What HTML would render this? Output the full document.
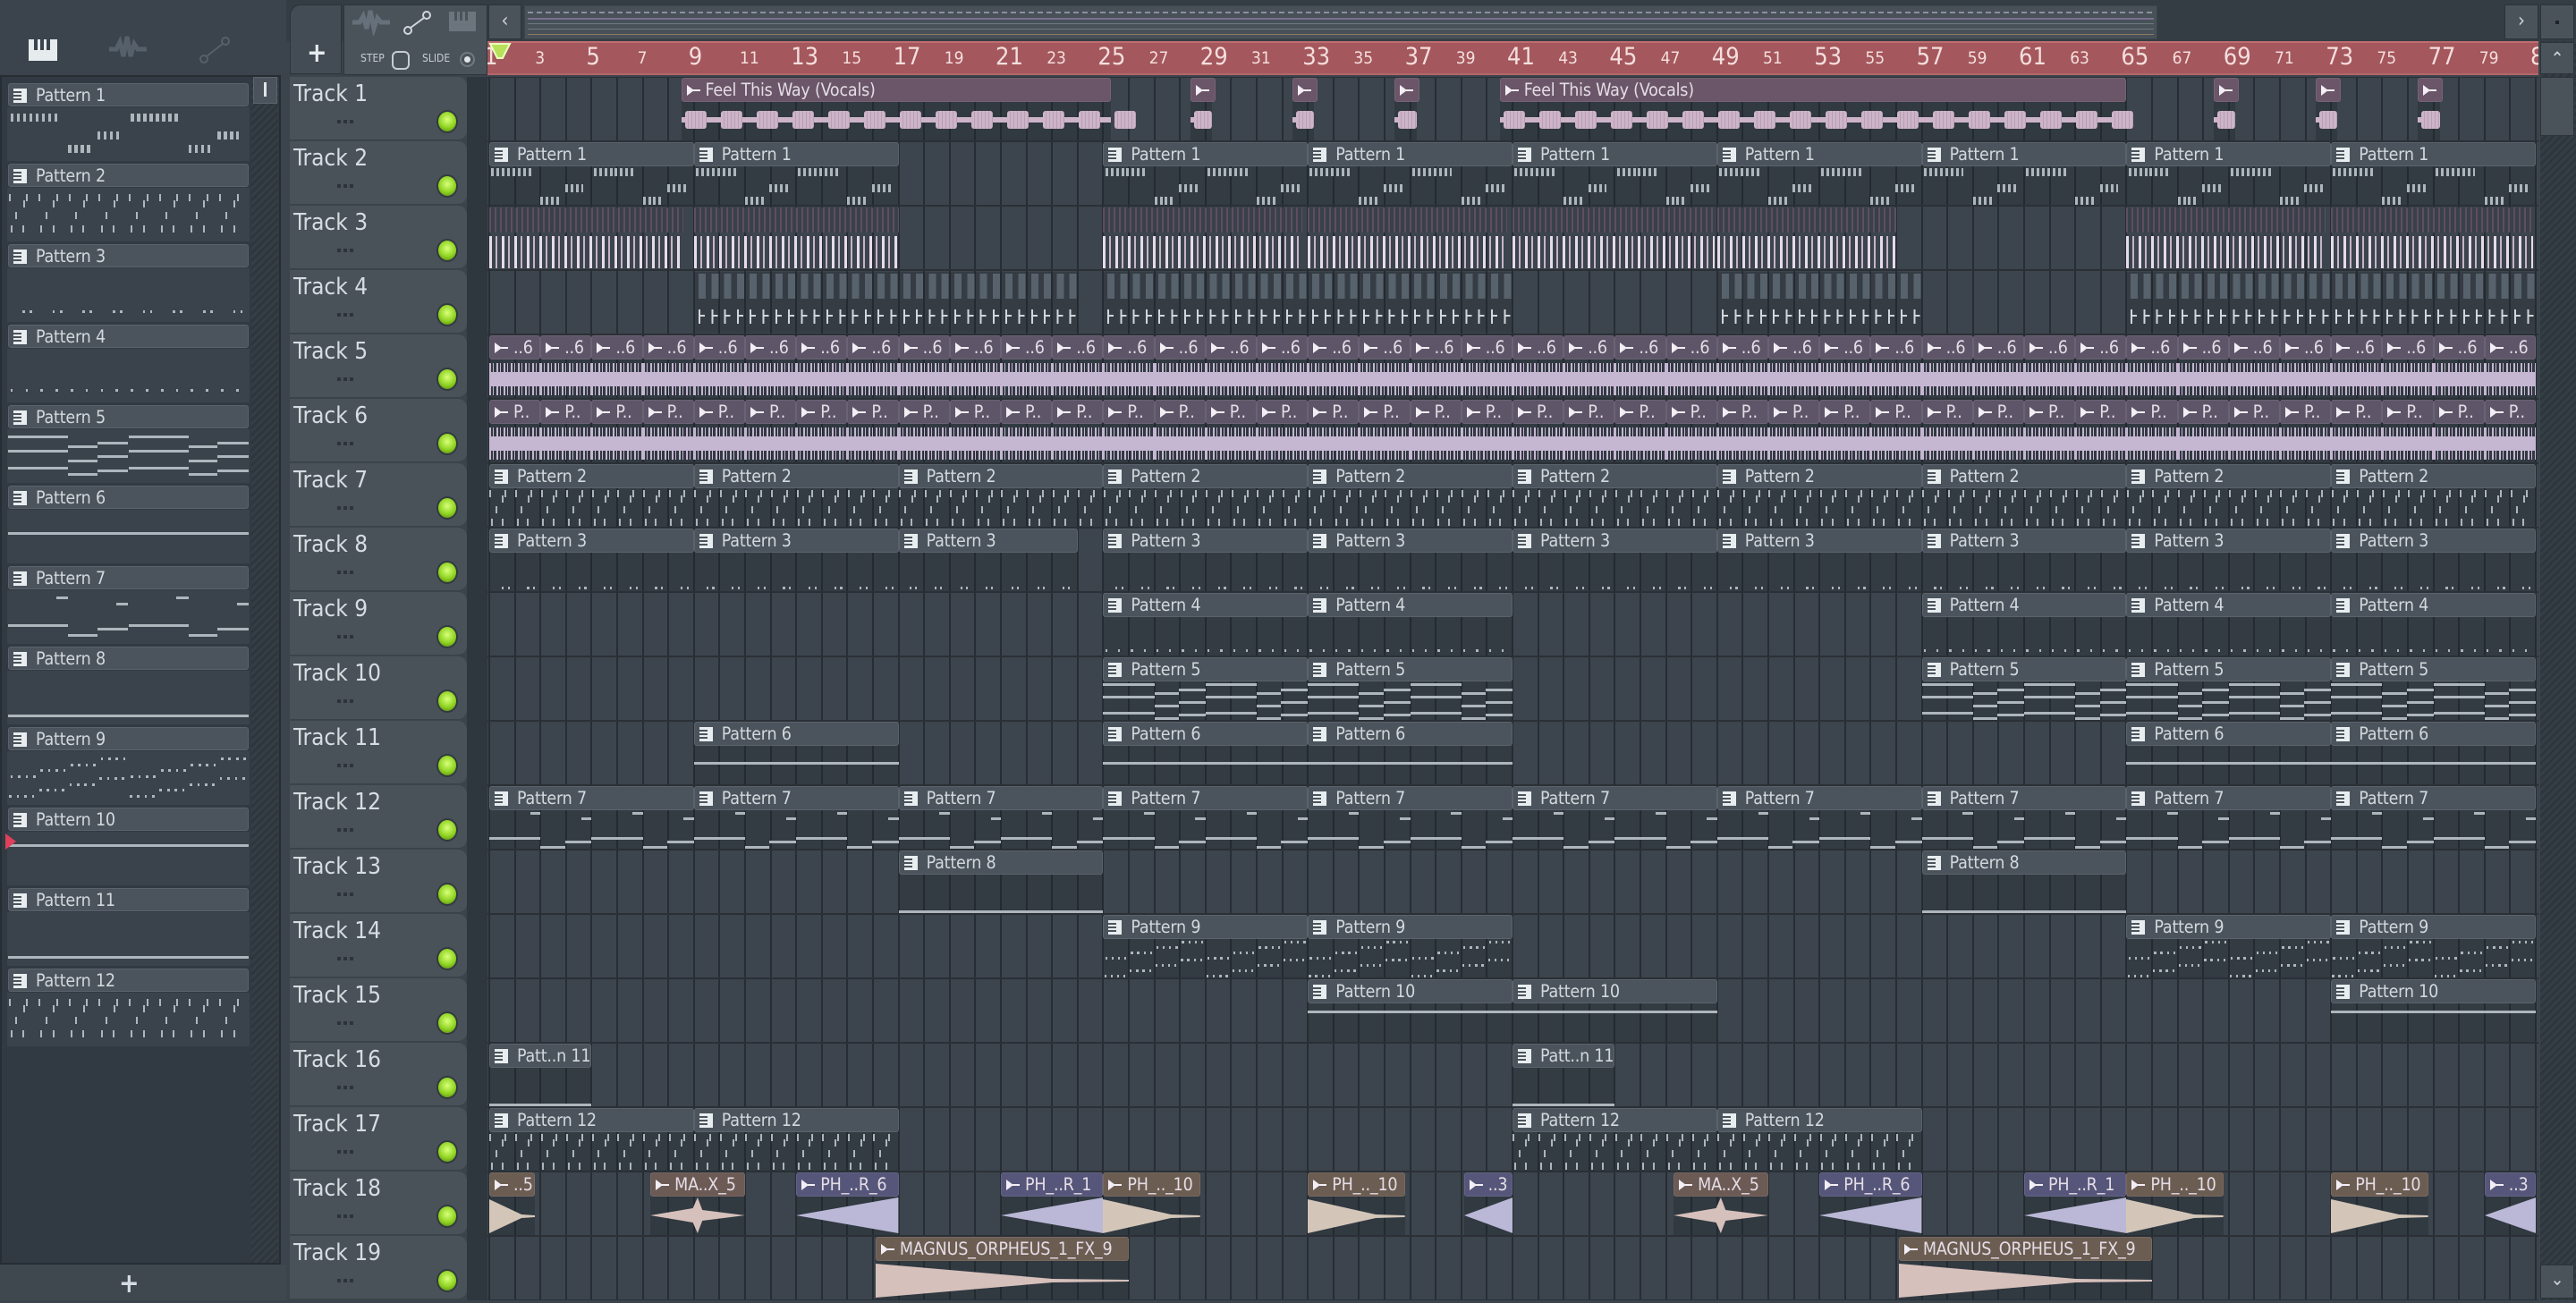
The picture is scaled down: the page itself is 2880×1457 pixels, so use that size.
<!DOCTYPE html>
<html><head><meta charset="utf-8"><style>
*{box-sizing:border-box;margin:0;padding:0}
body{width:2880px;height:1454px;overflow:hidden;background:#3b444c;font-family:"DejaVu Sans Condensed","Liberation Sans Narrow","Liberation Sans",sans-serif;position:relative}
.a{position:absolute}
.hd{position:absolute;background:#4b545c;border:1px solid #5a636b;border-radius:3px;color:#d2d9de;font-size:19.5px;letter-spacing:-0.2px;line-height:25px;white-space:nowrap;overflow:hidden;padding-left:30px}
.ic{position:absolute;left:5px;top:5px;width:15px;height:16px;background:#e8edf0}
.ic:before{content:"";position:absolute;left:0;top:3px;width:9px;height:2px;background:#4b545c;box-shadow:0 4px 0 #4b545c,0 8px 0 #4b545c}
.ah{position:absolute;border-radius:3px;color:#e4dde6;font-size:19.5px;letter-spacing:-0.2px;line-height:25px;white-space:nowrap;overflow:hidden;padding-left:26px}
.ah:before{content:"";position:absolute;left:5px;top:7px;width:0;height:0;border-top:6px solid transparent;border-bottom:6px solid transparent;border-left:8px solid #f3eef5}
.ah:after{content:"";position:absolute;left:12px;top:12px;width:8px;height:2px;background:#f3eef5}
.n{position:absolute;background:#aeb6bd}
.th{position:absolute;left:324px;width:198px;height:71px;background:#4a5259;border-radius:0 10px 10px 0;border-bottom:1px solid #3a4249}
.th b{position:absolute;left:4px;top:4px;font-weight:normal;color:#d6dde2;font-size:26px}
.th i{position:absolute;left:53px;top:48px;width:4px;height:4px;background:#2c333a;box-shadow:7px 0 0 #2c333a,14px 0 0 #2c333a}
.led{position:absolute;left:490px;width:20px;height:22px;border-radius:50%;background:radial-gradient(circle at 50% 40%,#d8ff7a,#8fd321 55%,#4f7d10);box-shadow:0 0 0 2px #323a40}
</style></head><body>
<div class="a" style="left:0;top:0;width:320px;height:84px;background:#3b444c"></div>
<div class="a" style="left:32px;top:44px;width:32px;height:24px;background:#e6ebee"></div>
<div class="a" style="left:38px;top:44px;width:4px;height:12px;background:#3b444c;box-shadow:7px 0 0 #3b444c,14px 0 0 #3b444c"></div>
<svg class="a" style="left:120px;top:38px" width="45" height="34"><path d="M2 17h8l4-8 4 16 4-22 4 22 4-14 4 6h10" stroke="#56606a" stroke-width="5" fill="none"/></svg>
<svg class="a" style="left:220px;top:40px" width="40" height="32"><circle cx="8" cy="26" r="4" stroke="#56606a" stroke-width="2" fill="none"/><circle cx="32" cy="6" r="4" stroke="#56606a" stroke-width="2" fill="none"/><path d="M11 23L29 9" stroke="#56606a" stroke-width="2"/></svg>
<div class="a" style="left:0;top:84px;width:314px;height:1330px;background:#313a42;border:2px solid #262d33"></div>
<div class="a" style="left:281px;top:86px;width:30px;height:1326px;background:repeating-linear-gradient(135deg,#2e363d 0 3px,#353d45 3px 6px)"></div>
<div class="a" style="left:283px;top:86px;width:27px;height:30px;background:#4a535b;border:1px solid #5c656d"></div>
<div class="a" style="left:295px;top:92px;width:3px;height:16px;background:#e0e5e8"></div>
<div class="a" style="left:0;top:1414px;width:320px;height:40px;background:#3f484f"></div>
<div class="a" style="left:133px;top:1418px;color:#d6dde2;font-size:30px;font-weight:bold">+</div>
<div class="a" style="left:320px;top:0;width:2560px;height:46px;background:#343c44"></div>
<div class="a" style="left:324px;top:5px;width:58px;height:78px;background:#434c54;border:1px solid #2c343a;border-radius:12px 0 0 0"></div>
<div class="a" style="left:343px;top:42px;color:#e6ebee;font-size:30px;font-weight:bold">+</div>
<div class="a" style="left:384px;top:5px;width:161px;height:79px;background:#4a535a;border:1px solid #2c343a"></div>
<svg class="a" style="left:392px;top:10px" width="45" height="30"><path d="M2 15h8l4-7 4 14 4-20 4 20 4-12 4 5h10" stroke="#66707a" stroke-width="5" fill="none"/></svg>
<svg class="a" style="left:450px;top:12px" width="34" height="28"><circle cx="6" cy="22" r="4" stroke="#d0d7dc" stroke-width="2" fill="none"/><circle cx="27" cy="5" r="4" stroke="#d0d7dc" stroke-width="2" fill="none"/><path d="M9 19L24 8" stroke="#d0d7dc" stroke-width="2"/></svg>
<div class="a" style="left:502px;top:13px;width:30px;height:22px;background:#6c757d"></div>
<div class="a" style="left:508px;top:13px;width:3px;height:10px;background:#4a535a;box-shadow:6px 0 0 #4a535a,12px 0 0 #4a535a"></div>
<div class="a" style="left:403px;top:58px;color:#c6ced4;font-size:12px">STEP</div>
<div class="a" style="left:438px;top:57px;width:20px;height:21px;border:2px solid #c6ced4;border-radius:6px"></div>
<div class="a" style="left:472px;top:58px;color:#c6ced4;font-size:12px">SLIDE</div>
<div class="a" style="left:514px;top:58px;width:17px;height:17px;border:2px solid #6f7980;border-radius:50%"></div>
<div class="a" style="left:519px;top:63px;width:7px;height:7px;background:#dfe5e8;border-radius:50%"></div>
<div class="a" style="left:546px;top:5px;width:37px;height:39px;background:#4a535a;border:1px solid #2c343a;color:#cfd6db;font-size:22px;text-align:center;line-height:36px">&lsaquo;</div>
<div class="a" style="left:586px;top:6px;width:1826px;height:38px;background:#485158;border:1px solid #3c454c"></div>
<div class="a" style="left:590px;top:13px;width:1818px;height:2px;background:repeating-linear-gradient(90deg,#8a8fa0 0 6px,transparent 6px 10px)"></div>
<div class="a" style="left:590px;top:20px;width:1818px;height:2px;background:#7a7090"></div>
<div class="a" style="left:590px;top:26px;width:1818px;height:1px;background:#6d7880"></div>
<div class="a" style="left:590px;top:32px;width:1818px;height:1px;background:#6d7880"></div>
<div class="a" style="left:590px;top:38px;width:1818px;height:1px;background:#8a7a60"></div>
<div class="a" style="left:2800px;top:5px;width:38px;height:39px;background:#4a535a;border:1px solid #2c343a;color:#cfd6db;font-size:22px;text-align:center;line-height:36px">&rsaquo;</div>
<div class="a" style="left:2840px;top:5px;width:38px;height:39px;background:#4a535a;border:1px solid #2c343a"></div>
<div class="a" style="left:2857px;top:23px;width:4px;height:4px;background:#1e2428"></div>
<div class="a" style="left:2840px;top:46px;width:40px;height:1408px;background:repeating-linear-gradient(135deg,#2e363d 0 3px,#353d45 3px 6px)"></div>
<div class="a" style="left:2840px;top:47px;width:38px;height:36px;background:#4a535a;border:1px solid #2c343a;color:#cfd6db;font-size:20px;text-align:center;line-height:34px">&#8963;</div>
<div class="a" style="left:2840px;top:86px;width:38px;height:66px;background:#4a535a;border:1px solid #2c343a"></div>
<div class="a" style="left:2840px;top:1414px;width:38px;height:38px;background:#4a535a;border:1px solid #2c343a;color:#cfd6db;font-size:20px;text-align:center;line-height:30px">&#8964;</div>
<div class="a" id="ruler" style="left:545px;top:46px;width:2293px;height:38px;background:#a4575c;border-top:2px solid #bf6d71;border-bottom:2px solid #b4676b;overflow:hidden"></div>
<svg class="a" style="left:546px;top:47px" width="30" height="22"><path d="M2 2h22l-8 16h-6z" fill="#b8e05a" stroke="#e9ffc0" stroke-width="2"/></svg>
<div class="a" style="left:522px;top:86px;width:23px;height:1368px;background:#2f373e"></div>
<div class="a" id="grid" style="left:545px;top:86px;width:2293px;height:1368px;background:#3c444d;overflow:hidden"></div>
<div id="L"></div>
<script>
var X0=547,BW=28.6,R0=86,RH=72;
function bx(b){return X0+(b-1)*BW}
var H=[];
function d(s,st,c){H.push('<div class="'+(c||'a')+'" style="'+st+'">'+(s||'')+'</div>')}
var rh='';for(var b=1;b<=81;b+=2){var x=(b-1)*BW+2;var big=(b-1)%4==0;rh+='<div class="a" style="left:'+(x-6)+'px;top:'+(big?0:6)+'px;color:#f4dede;font-size:'+(big?27:19)+'px">'+b+'</div>'}
document.getElementById('ruler').innerHTML=rh;
var g='';
for(var b=1;b<=82;b++){g+='<div class="a" style="left:'+((b-1)*BW+1)+'px;top:0;width:2px;height:1368px;background:#272d33"></div>'}
for(var r=0;r<=19;r++){g+='<div class="a" style="left:0;top:'+(r*RH-1)+'px;width:2293px;height:2px;background:#2a3036"></div>'}
document.getElementById('grid').innerHTML=g;
for(var r=0;r<19;r++){var y=R0+r*RH;d('<b>Track '+(r+1)+'</b><i></i>','top:'+y+'px','th');d('','top:'+(y+39)+'px','led')}
function notes(p,len){var o=[],k,bars=len;
 function tk(x,y,n,h){for(var j=0;j<n;j++)o.push([x+j*0.026,x+j*0.026+0.013,y,h||9])}
 if(p==1){for(k=0;k<2;k++){var s=k*0.5;tk(s+0.01,2,8);tk(s+0.37,20,4);tk(s+0.25,34,4)}}
 else if(p==2||p==12){for(k=0;k<bars;k++){var s=k/bars;o.push([s+0.002,s+0.008,2,8]);o.push([s+0.062,s+0.068,8,8]);o.push([s+0.075,s+0.081,2,8]);o.push([s+0.03,s+0.036,20,8]);o.push([s+0.01,s+0.016,34,8]);o.push([s+0.06,s+0.066,34,8])}}
 else if(p==3){for(k=0;k<bars;k++){var s=k/bars;o.push([s+0.06,s+0.07,38,3]);o.push([s+0.09,s+0.1,38,3])}}
 else if(p==4){for(k=0;k<bars*2;k++){var s=k/(bars*2);o.push([s+0.01,s+0.02,36,3])}}
 else if(p==5){var L=[[0,.25,2],[0,.25,16],[0,.25,34],[.25,.37,12],[.25,.37,26],[.25,.37,40],[.37,.5,8],[.37,.5,22],[.37,.5,36]];for(k=0;k<2;k++)L.forEach(function(l){o.push([l[0]+k*.5,l[1]+k*.5,l[2],3])})}
 else if(p==6){o.push([0,1,18,3])}
 else if(p==7){var L=[[.2,.25,2],[.45,.5,8],[0,.25,30],[.25,.37,40],[.37,.5,34]];for(k=0;k<2;k++)L.forEach(function(l){o.push([l[0]+k*.5,l[1]+k*.5,l[2],3])})}
 else if(p==8||p==11){o.push([0,1,40,3])}
 else if(p==10){o.push([0,1,8,3])}
 else if(p==9){for(k=0;k<2;k++)for(var j=0;j<16;j++){var s=k*.5+j*.5/16;o.push([s+.01,s+.02,20-Math.floor(j/4)*6,3]);o.push([s+.005,s+.015,40-Math.floor(j/4)*6,3])}}
 return o}
function pclip(r,b,len,p,label){var x=bx(b),w=len*BW,y=R0+r*RH;
 d('','left:'+x+'px;top:'+(y+27)+'px;width:'+w+'px;height:44px;background:rgba(30,36,42,.28)');
 d('<span class="ic"></span>'+label,'left:'+x+'px;top:'+(y+1)+'px;width:'+w+'px;height:27px','hd');
 var sc=8/len;
 notes(p,len).forEach(function(n){var x0=n[0],x1=n[1];if(p==1){x0*=sc;x1*=sc}if(x1>1.001)return;d('','left:'+(x+x0*w)+'px;top:'+(y+28+n[2])+'px;width:'+Math.max(2,(x1-x0)*w)+'px;height:'+n[3]+'px','n')})}
function aclip(r,b,len,label,hc,wc,shape){var x=bx(b),w=len*BW,y=R0+r*RH;
 d('','left:'+x+'px;top:'+(y+27)+'px;width:'+w+'px;height:44px;background:rgba(30,36,42,.35)');
 if(shape=='band'){d('','left:'+x+'px;top:'+(y+32)+'px;width:'+w+'px;height:36px;background:repeating-linear-gradient(90deg,'+wc+' 0 2px,transparent 2px 4px,'+wc+' 4px 5px,transparent 5px 8px)');d('','left:'+x+'px;top:'+(y+42)+'px;width:'+w+'px;height:16px;background:'+wc)}
 else if(shape=='vox'){d('','left:'+x+'px;top:'+(y+45)+'px;width:'+w+'px;height:6px;background:'+wc);for(var i=0;i<w/40;i++)d('','left:'+(x+i*40+4)+'px;top:'+(y+38)+'px;width:'+Math.min(24,w-4)+'px;height:20px;border-radius:3px;background:repeating-linear-gradient(90deg,'+wc+' 0 3px,#b89fb3 3px 4px)')}
 else if(shape=='dec'){d('<svg width="'+w+'" height="44"><path d="M0 4 L'+(w*0.7)+' 21 L'+w+' 22 L'+w+' 24 L'+(w*0.7)+' 25 L0 42Z" fill="'+wc+'"/></svg>','left:'+x+'px;top:'+(y+27)+'px;width:'+w+'px;height:44px')}
 else if(shape=='dec2'){d('<svg width="'+w+'" height="44"><path d="M0 22 L'+(w*0.45)+' 14 L'+(w*0.5)+' 2 L'+(w*0.55)+' 16 L'+w+' 22 L'+(w*0.55)+' 28 L'+(w*0.5)+' 42 L'+(w*0.45)+' 30Z" fill="'+wc+'"/></svg>','left:'+x+'px;top:'+(y+27)+'px;width:'+w+'px;height:44px')}
 else if(shape=='rise'){d('<svg width="'+w+'" height="44"><path d="M0 22 L'+(w*0.9)+' 4 L'+w+' 2 L'+w+' 42 L'+(w*0.9)+' 40Z" fill="'+wc+'"/></svg>','left:'+x+'px;top:'+(y+27)+'px;width:'+w+'px;height:44px')}
 d(label,'left:'+x+'px;top:'+(y+1)+'px;width:'+w+'px;height:27px;background:'+hc+';border:1px solid rgba(255,255,255,.08)','ah')}
var V='#cdb4c9',VH='#6a5668';
aclip(0,8.5,16.8,'Feel This Way (Vocals)',VH,V,'vox');
aclip(0,40.5,24.5,'Feel This Way (Vocals)',VH,V,'vox');
[28.4,32.4,36.4,68.4,72.4,76.4].forEach(function(b){aclip(0,b,0.85,'',VH,V,'vox')});
[1,9,25,33,41,49,57,65,73].forEach(function(b){pclip(1,b,8,1,'Pattern 1')});
[[1,7.6],[9,8],[25,7.8],[33,7.8],[41,7.9],[49,7],[65,7.8],[73,7.9]].forEach(function(c){var x=bx(c[0]),w=c[1]*BW,y=R0+2*RH;
 d('','left:'+x+'px;top:'+(y+2)+'px;width:'+w+'px;height:28px;background:repeating-linear-gradient(90deg,#5e4e60 0 2px,#39404a 2px 6px)');
 d('','left:'+x+'px;top:'+(y+34)+'px;width:'+w+'px;height:36px;background:repeating-linear-gradient(90deg,#e6dbe9 0 3px,transparent 3px 7px,#c6b4c8 7px 9px,transparent 9px 14px)')});
[[9,15],[25,16],[49,8],[65,16]].forEach(function(c){var x=bx(c[0]),w=c[1]*BW,y=R0+3*RH;
 d('','left:'+x+'px;top:'+(y+2)+'px;width:'+w+'px;height:68px;background:rgba(30,36,42,.25)');
 d('','left:'+(x+5)+'px;top:'+(y+4)+'px;width:'+(w-5)+'px;height:28px;background:repeating-linear-gradient(90deg,#58626c 0 8px,transparent 8px 14.3px)');
 d('','left:'+(x+5)+'px;top:'+(y+44)+'px;width:'+(w-5)+'px;height:16px;background:repeating-linear-gradient(90deg,#d0d6da 0 2px,transparent 2px 14.3px)');
 d('','left:'+(x+5)+'px;top:'+(y+50)+'px;width:'+(w-5)+'px;height:2px;background:repeating-linear-gradient(90deg,#d0d6da 0 7px,transparent 7px 14.3px)')});
var W5='#c5b6d2',H5='#5e5668';
[[1,12],[25,20],[65,8]].forEach(function(g){for(var i=0;i<g[1];i++){aclip(4,g[0]+i*2,2,'..6',H5,W5,'band');aclip(5,g[0]+i*2,2,'P..',H5,W5,'band')}});
function P(r,list,len,p,lab){list.forEach(function(b){pclip(r,b,len,p,lab)})}
P(6,[1,9,17,25,33,41,49,57,65,73],8,2,'Pattern 2');
P(7,[1,9],8,3,'Pattern 3');pclip(7,17,7,3,'Pattern 3');P(7,[25,33,41,49,57,65,73],8,3,'Pattern 3');
P(8,[25,33,57,65,73],8,4,'Pattern 4');
P(9,[25,33,57,65,73],8,5,'Pattern 5');
P(10,[9,25,33,65,73],8,6,'Pattern 6');
P(11,[1,9,17,25,33,41,49,57,65,73],8,7,'Pattern 7');
P(12,[17,57],8,8,'Pattern 8');
P(13,[25,33,65,73],8,9,'Pattern 9');
P(14,[33,41,73],8,10,'Pattern 10');
P(15,[1,41],4,11,'Patt..n 11');
P(16,[1,9,41,49],8,12,'Pattern 12');
var BR='#6c5d52',PU='#56567a',BE='#d3c6b8',LA='#bab8d6',PK='#d6c0bb';
[[1,1.8,'..5',BR,BE,'dec'],[7.3,3.7,'MA..X_5','#6c5a55',PK,'dec2'],[13,4,'PH_..R_6',PU,LA,'rise'],[21,4,'PH_..R_1',PU,LA,'rise'],[25,3.8,'PH_.._10',BR,BE,'dec'],[33,3.8,'PH_.._10',BR,BE,'dec'],[39.1,1.9,'..3',PU,LA,'rise'],[47.3,3.7,'MA..X_5','#6c5a55',PK,'dec2'],[53,4,'PH_..R_6',PU,LA,'rise'],[61,4,'PH_..R_1',PU,LA,'rise'],[65,3.8,'PH_.._10',BR,BE,'dec'],[73,3.8,'PH_.._10',BR,BE,'dec'],[79,2,'..3',PU,LA,'rise']].forEach(function(c){aclip(17,c[0],c[1],c[2],c[3],c[4],c[5])});
aclip(18,16.1,9.9,'MAGNUS_ORPHEUS_1_FX_9',BR,PK,'dec');
aclip(18,56.1,9.9,'MAGNUS_ORPHEUS_1_FX_9',BR,PK,'dec');
for(var i=0;i<12;i++){var y=93+90*i;
 d('<span class="ic"></span>Pattern '+(i+1),'left:9px;top:'+y+'px;width:269px;height:26px','hd');
 d('','left:8px;top:'+(y+27)+'px;width:271px;height:60px;background:#3a434b');
 notes(i+1,8).forEach(function(n){d('','left:'+(9+n[0]*269)+'px;top:'+(y+32+n[2]*1.1)+'px;width:'+Math.max(2,(n[1]-n[0])*269)+'px;height:'+n[3]+'px','n')})}
d('','left:6px;top:932px;width:0;height:0;border-top:9px solid transparent;border-bottom:9px solid transparent;border-left:12px solid #e0405a');
document.getElementById('L').innerHTML=H.join('');
</script>
</body></html>
